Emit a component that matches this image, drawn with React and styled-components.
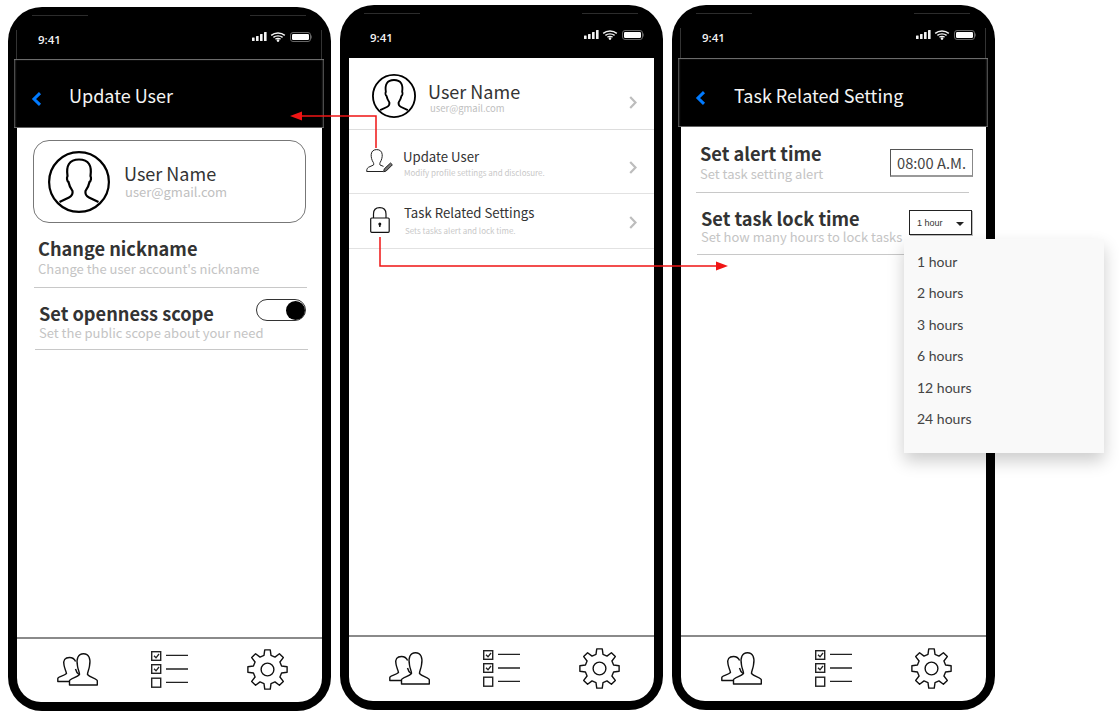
import React from "react";
import styled, { createGlobalStyle } from "styled-components";

const Global = createGlobalStyle`
  html, body { margin: 0; padding: 0; background: #fff; }
  body { font-family: "Noto Sans CJK SC", "Noto Sans", sans-serif; overflow: hidden; }
`;

const Stage = styled.div`
  position: relative;
  width: 1119px;
  height: 717px;
  overflow: hidden;
  display: flex;
  align-items: flex-start;
  gap: 9px;
  padding-left: 8px;
  box-sizing: border-box;
`;

const Phone = styled.div`
  width: 323px;
  height: ${(p) => p.$height}px;
  margin-top: ${(p) => p.$top}px;
  box-sizing: border-box;
  padding: 8px 9px 9px 9px;
  background: #000;
  border-radius: 34px;
  display: flex;
  flex-direction: column;
  flex: none;
`;

const StatusBar = styled.div`
  height: ${(p) => p.$height}px;
  flex: none;
  position: relative;
  display: flex;
  align-items: flex-start;
  justify-content: space-between;
  padding: 17px 10px 0 21px;
  box-sizing: border-box;
  color: #f2f2f2;
  ${(p) =>
    p.$framed &&
    `&::after {
      content: "";
      position: absolute;
      left: -1px;
      right: 0;
      top: 15px;
      bottom: 0;
      border-left: 1px solid #333;
      border-right: 1px solid #333;
    }`}
`;

const Notch = styled.i`
  position: absolute;
  top: 0;
  width: 56px;
  height: 1px;
  background: #2c2c2c;
  ${(p) => (p.$right ? "right: 16px;" : "left: 15px;")}
`;

const Clock = styled.span`
  font-family: "Open Sans", sans-serif;
  font-size: 11.5px;
  font-weight: 600;
  line-height: 16px;
`;

const AppBar = styled.header`
  height: 69px;
  flex: none;
  margin: 0 -2px 0 -3px;
  background: #000;
  box-shadow: inset 0 2px 1px -1px #777, inset 2px 0 2px -1px #666, inset -2px 0 2px -1px #666, inset 0 -1px 0 #666;
  display: flex;
  align-items: center;
  padding: 5px 0 0 17px;
  box-sizing: border-box;
  color: #f4f4f4;
  font-size: 18px;
  line-height: 24px;
`;

const AppTitle = styled.span`
  margin-left: ${(p) => p.$gap}px;
  margin-top: ${(p) => p.$shift}px;
`;

const Screen = styled.div`
  flex: 1;
  min-height: 0;
  background: #fff;
  border-radius: 0 0 24px 24px;
  display: flex;
  flex-direction: column;
  overflow: hidden;
`;

const Content = styled.main`
  flex: 1;
  min-height: 0;
`;

const ProfileCard = styled.div`
  margin: 12px 0 0 16px;
  width: 273px;
  height: 83px;
  box-sizing: border-box;
  border: 1px solid #777;
  border-radius: 16px;
  display: flex;
  align-items: center;
  padding-left: 14px;
  gap: 14px;
`;

const NameBlock = styled.div`
  display: flex;
  flex-direction: column;
  padding-bottom: ${(p) => p.$lift || 0}px;
`;

const BigName = styled.div`
  font-size: 18px;
  line-height: 24px;
  color: #333;
`;

const BigMail = styled.div`
  font-size: 13px;
  line-height: 14px;
  color: #c0c0c0;
  margin-left: 1px;
`;

const SettingRow = styled.div`
  margin: 0 0 0 ${(p) => p.$left}px;
  width: 273px;
  box-sizing: border-box;
  padding: ${(p) => p.$pt}px 0 ${(p) => p.$pb}px ${(p) => p.$inset}px;
  border-bottom: 1px solid #c8c8c8;
  display: flex;
  justify-content: space-between;
  align-items: flex-start;
`;

const SettingText = styled.div`
  display: flex;
  flex-direction: column;
  flex: none;
`;

const SettingTitle = styled.div`
  font-size: 18.2px;
  font-weight: 700;
  line-height: 24px;
  color: #333;
`;

const SettingSub = styled.div`
  font-size: 13px;
  line-height: ${(p) => p.$lh}px;
  color: #c4c4c4;
  white-space: nowrap;
`;

const Toggle = styled.div`
  width: 50px;
  height: 22px;
  box-sizing: border-box;
  margin: -2px 2px 0 -8px;
  border: 1px solid #333;
  border-radius: 11px;
  background: #fff;
  display: flex;
  justify-content: flex-end;
  align-items: center;
  flex: none;
`;

const Knob = styled.span`
  width: 19px;
  height: 19px;
  border-radius: 50%;
  background: #000;
`;

const TimeInput = styled.div`
  width: 83px;
  height: 28px;
  box-sizing: border-box;
  margin: 8px -4px 0 0;
  border: 1px solid #555;
  border-right: 1px solid #888;
  border-bottom: 2px solid #999;
  font-size: 14.7px;
  line-height: 26px;
  color: #444;
  text-align: center;
  flex: none;
`;

const SelectBox = styled.div`
  width: 63px;
  height: 25px;
  box-sizing: border-box;
  margin: 4px -2px 0 0;
  border: 1px solid #222;
  box-shadow: 1px 1px 0 #bbb;
  font-family: "Liberation Sans", sans-serif;
  font-size: 9px;
  color: #333;
  display: flex;
  align-items: center;
  justify-content: space-between;
  padding: 0 7px 0 7px;
  flex: none;
`;

const Caret = styled.i`
  width: 0;
  height: 0;
  margin-top: 3px;
  border-left: 4px solid transparent;
  border-right: 4px solid transparent;
  border-top: 4px solid #222;
`;

const ProfileRow = styled.div`
  height: 72px;
  box-sizing: border-box;
  border-bottom: 1px solid #ddd;
  display: flex;
  align-items: flex-start;
  padding: 16px 0 0 23px;
  gap: 12px;
  position: relative;
`;

const MidName = styled.div`
  font-size: 18px;
  line-height: 24px;
  color: #333;
  margin-top: 5px;
`;

const MidMail = styled.div`
  font-size: 9.5px;
  line-height: 10px;
  color: #c0c0c0;
  margin-left: 2px;
`;

const MenuRow = styled.div`
  height: ${(p) => p.$height}px;
  box-sizing: border-box;
  border-bottom: 1px solid #e2e2e2;
  display: flex;
  align-items: flex-start;
  padding: ${(p) => p.$pt}px 0 0 ${(p) => p.$pl}px;
  gap: ${(p) => p.$gap}px;
  position: relative;
`;

const MenuTitle = styled.div`
  font-size: 13.2px;
  line-height: 18px;
  color: #333;
  margin-top: ${(p) => p.$mt}px;
`;

const MenuSub = styled.div`
  font-size: 8px;
  line-height: 11px;
  color: #c8c8c8;
  margin: ${(p) => p.$mt}px 0 0 1px;
`;

const Chevron = styled.svg`
  position: absolute;
  right: 17px;
  top: ${(p) => p.$top}px;
  width: 8px;
  height: 13px;
`;

const TabBar = styled.nav`
  flex: none;
  height: ${(p) => p.$height}px;
  box-sizing: border-box;
  border-top: 2px solid #8a8a8a;
  display: grid;
  grid-template-columns: 94px 96px 41px;
  align-items: center;
  padding: 0 0 2px 40px;
`;

const Dropdown = styled.ul`
  position: absolute;
  left: 904px;
  top: 239px;
  width: 200px;
  height: 214px;
  box-sizing: border-box;
  margin: 0;
  padding: 7px 0 0 13px;
  list-style: none;
  background: #f9f9f9;
  box-shadow: 0 8px 16px rgba(0, 0, 0, 0.2);
  font-family: "Lato", sans-serif;
  font-size: 14px;
  color: #444;
`;

const DropItem = styled.li`
  height: 31.4px;
  line-height: 32px;
`;

const Arrows = styled.svg`
  position: absolute;
  left: 0;
  top: 0;
  width: 1119px;
  height: 717px;
  pointer-events: none;
`;

const BackGlyph = styled.svg`
  margin-top: 6px;
  flex: none;
`;

const gearPath = (() => {
  const pts = [];
  const c = 20.5;
  const p = (deg, r) => {
    const t = (deg * Math.PI) / 180;
    return `${(c + r * Math.cos(t)).toFixed(2)} ${(c + r * Math.sin(t)).toFixed(2)}`;
  };
  for (let i = 0; i < 8; i++) {
    const a = i * 45 - 90;
    pts.push(p(a - 14, 14.5), p(a - 8, 19.8), p(a + 8, 19.8), p(a + 14, 14.5));
  }
  return "M" + pts.join("L") + "Z";
})();

const BUST =
  "M11.5 51 L21 46.5 C24 45 25 43 24.5 40 C22.5 37 21 34 20.5 31 C19 30 18.5 27 19.5 25 C18 15 21 8.5 31 8.5 C41 8.5 44 15 42.5 25 C43.5 27 43 30 41.5 31 C41 34 39.5 37 37.5 40 C37 43 38 45 41 46.5 L50.5 51";

const Avatar = ({ size, stroke }) => (
  <svg width={size} height={size} viewBox="0 0 62 62" fill="none" stroke="#000" strokeWidth={stroke} style={{ flex: "none" }}>
    <circle cx="31" cy="31" r={31 - stroke / 2} />
    <path d={BUST} />
  </svg>
);

const StatusIcons = () => (
  <svg width="60" height="11" viewBox="0 0 60 11">
    <g fill="#f4f4f4">
      <rect x="0" y="5.5" width="2.6" height="3.5" rx=".5" />
      <rect x="4" y="4" width="2.6" height="5" rx=".5" />
      <rect x="8" y="2" width="2.6" height="7" rx=".5" />
      <rect x="12" y="0" width="2.6" height="9" rx=".5" />
      <circle cx="26" cy="8.6" r="1.3" />
    </g>
    <g fill="none" stroke="#f4f4f4" strokeWidth="1.4">
      <path d="M19.2 3.4 C23 .2 29 .2 32.8 3.4" />
      <path d="M21.4 5.4 C24 3.4 28 3.4 30.6 5.4" />
      <path d="M23.4 7.2 C25 6.2 27 6.2 28.6 7.2" />
    </g>
    <rect x="38.5" y=".5" width="20" height="9" rx="2.5" fill="none" stroke="#666" />
    <rect x="40" y="2" width="17" height="6" rx="1.2" fill="#fff" />
    <rect x="59.3" y="3.5" width="1" height="3" fill="#666" />
  </svg>
);

const PeopleIcon = () => (
  <svg width="41" height="33" viewBox="0 0 41 33" fill="none" stroke="#111" strokeWidth="1.4" strokeLinejoin="round">
    <path d="M12.5 28.5 H.8 V25.5 C.8 23.5 7 23 9.5 20.5 C9 18 7.5 15.5 7 12 C6 7 8 4.5 12.5 4.5 C15.5 4.5 17.5 6 18.6 8.5 M18.5 16 C19 18 20 20 22 21.5" />
    <path fill="#fff" d="M12.5 32 V27.8 C12.5 25.5 20 24.5 22.5 21.5 C22.5 19 21 17 20.5 13 C19 6 21 .8 26.5 .8 C32 .8 34 6 32.5 13 C32 17 30.5 19 30.5 21.5 C33 24.5 40.3 25.5 40.3 27.8 V32 Z" />
  </svg>
);

const ChecklistIcon = () => (
  <svg width="38" height="37" viewBox="0 0 38 37" fill="none" stroke="#222" strokeWidth="1.4">
    <rect x=".7" y=".7" width="9" height="8.6" />
    <rect x=".7" y="13.7" width="9" height="8.6" />
    <rect x=".7" y="27.2" width="9" height="9" />
    <path d="M3 4.8 L5 6.8 L8 3 M3 17.8 L5 19.8 L8 16" strokeWidth="1.3" />
    <path d="M15 4.4 H37 M15 18 H37 M15 31.4 H37" />
  </svg>
);

const GearIcon = () => (
  <svg width="41" height="41" viewBox="0 0 41 41" fill="none" stroke="#111" strokeWidth="1.4" strokeLinejoin="round">
    <path d={gearPath} />
    <circle cx="20.5" cy="20.5" r="6.4" />
  </svg>
);

const BackIcon = () => (
  <BackGlyph width="11" height="14" viewBox="0 0 11 14" fill="none" stroke="#007aff" strokeWidth="3">
    <path d="M9 1.2 L3 7 L9 12.8" />
  </BackGlyph>
);

const ChevronRight = ({ top }) => (
  <Chevron $top={top} viewBox="0 0 8 13" fill="none" stroke="#bdbdbd" strokeWidth="2.2">
    <path d="M1.2 1 L6.5 6.5 L1.2 12" />
  </Chevron>
);

const UserPenIcon = () => (
  <svg width="27" height="24" viewBox="0 0 27 24" fill="none" stroke="#222" strokeWidth="1" style={{ flex: "none" }}>
    <path d="M17 22.5 H.7 C.7 19.5 1.5 18.5 4 17.6 L7.5 16 C8 15 7.5 13.5 7 13 C5.8 11 5 8 5.2 5.5 C5.5 2 7.8 .6 10.7 .6 C13.6 .6 15.8 2 16.2 5.5 C16.4 8 15.6 11 14.4 13 C13.8 14 13.6 15 14 16 L17.5 17.4" />
    <path d="M17.6 22.8 L18.3 19.8 L24.5 14 L26.4 15.8 L20.2 22 Z" fill="#777" />
  </svg>
);

const LockIcon = () => (
  <svg width="20" height="26" viewBox="0 0 20 26" fill="none" stroke="#111" strokeWidth="1.2" style={{ flex: "none" }}>
    <path d="M3.5 11 V7 C3.5 3 6 .7 9.7 .7 C13.4 .7 16 3 16 7 V11" />
    <rect x=".7" y="11" width="18.5" height="14.3" rx="1" />
    <circle cx="9.8" cy="17" r="1.5" fill="#111" stroke="none" />
    <rect x="9.1" y="17" width="1.4" height="3" fill="#111" stroke="none" />
  </svg>
);

const Status = ({ height, framed }) => (
  <StatusBar $height={height} $framed={framed}>
    <Notch />
    <Notch $right />
    <Clock>9:41</Clock>
    <StatusIcons />
  </StatusBar>
);

const Tabs = ({ height }) => (
  <TabBar $height={height}>
    <PeopleIcon />
    <ChecklistIcon />
    <GearIcon />
  </TabBar>
);

const hours = ["1 hour", "2 hours", "3 hours", "6 hours", "12 hours", "24 hours"];

export default function App() {
  return (
    <Stage>
      <Global />
      <Phone $top={7} $height={704}>
        <Status height={44} framed />
        <AppBar>
          <BackIcon />
          <AppTitle $gap={27} $shift={-3}>Update User</AppTitle>
        </AppBar>
        <Screen>
          <Content>
            <ProfileCard>
              <Avatar size={62} stroke={2.2} />
              <NameBlock $lift={4}>
                <BigName>User Name</BigName>
                <BigMail>user@gmail.com</BigMail>
              </NameBlock>
            </ProfileCard>
            <SettingRow $left={17} $inset={4} $pt={13} $pb={9}>
              <SettingText>
                <SettingTitle>Change nickname</SettingTitle>
                <SettingSub $lh={18}>Change the user account's nickname</SettingSub>
              </SettingText>
            </SettingRow>
            <SettingRow $left={18} $inset={4} $pt={13} $pb={8}>
              <SettingText>
                <SettingTitle>Set openness scope</SettingTitle>
                <SettingSub $lh={16}>Set the public scope about your need</SettingSub>
              </SettingText>
              <Toggle>
                <Knob />
              </Toggle>
            </SettingRow>
          </Content>
          <Tabs height={65} />
        </Screen>
      </Phone>

      <Phone $top={5} $height={705}>
        <Status height={45} />
        <Screen>
          <Content>
            <ProfileRow>
              <Avatar size={44} stroke={2.6} />
              <NameBlock>
                <MidName>User Name</MidName>
                <MidMail>user@gmail.com</MidMail>
              </NameBlock>
              <ChevronRight top={38} />
            </ProfileRow>
            <MenuRow $height={64} $pt={19} $pl={17} $gap={10}>
              <UserPenIcon />
              <div>
                <MenuTitle $mt={-1}>Update User</MenuTitle>
                <MenuSub $mt={1}>Modify profile settings and disclosure.</MenuSub>
              </div>
              <ChevronRight top={31} />
            </MenuRow>
            <MenuRow $height={55} $pt={13} $pl={21} $gap={14}>
              <LockIcon />
              <div>
                <MenuTitle $mt={-3}>Task Related Settings</MenuTitle>
                <MenuSub $mt={3}>Sets tasks alert and lock time.</MenuSub>
              </div>
              <ChevronRight top={22} />
            </MenuRow>
          </Content>
          <Tabs height={66} />
        </Screen>
      </Phone>

      <Phone $top={5} $height={705}>
        <Status height={45} framed />
        <AppBar>
          <BackIcon />
          <AppTitle $gap={28} $shift={-1}>Task Related Setting</AppTitle>
        </AppBar>
        <Screen>
          <Content>
            <SettingRow $left={15} $inset={4} $pt={14} $pb={9}>
              <SettingText>
                <SettingTitle>Set alert time</SettingTitle>
                <SettingSub $lh={18}>Set task setting alert</SettingSub>
              </SettingText>
              <TimeInput>08:00 A.M.</TimeInput>
            </SettingRow>
            <SettingRow $left={16} $inset={4} $pt={13} $pb={10}>
              <SettingText>
                <SettingTitle>Set task lock time</SettingTitle>
                <SettingSub $lh={14}>Set how many hours to lock tasks</SettingSub>
              </SettingText>
              <SelectBox>
                1 hour
                <Caret />
              </SelectBox>
            </SettingRow>
          </Content>
          <Tabs height={66} />
        </Screen>
      </Phone>

      <Dropdown>
        {hours.map((h) => (
          <DropItem key={h}>{h}</DropItem>
        ))}
      </Dropdown>

      <Arrows viewBox="0 0 1119 717" fill="none">
        <path d="M376 148 V116 H300" stroke="#f01414" strokeWidth="1.5" />
        <path d="M290 116 L302 111.5 V120.5 Z" fill="#f01414" />
        <path d="M380 237 V266 H718" stroke="#f01414" strokeWidth="1.5" />
        <path d="M728 266 L716 261.5 V270.5 Z" fill="#f01414" />
      </Arrows>
    </Stage>
  );
}
